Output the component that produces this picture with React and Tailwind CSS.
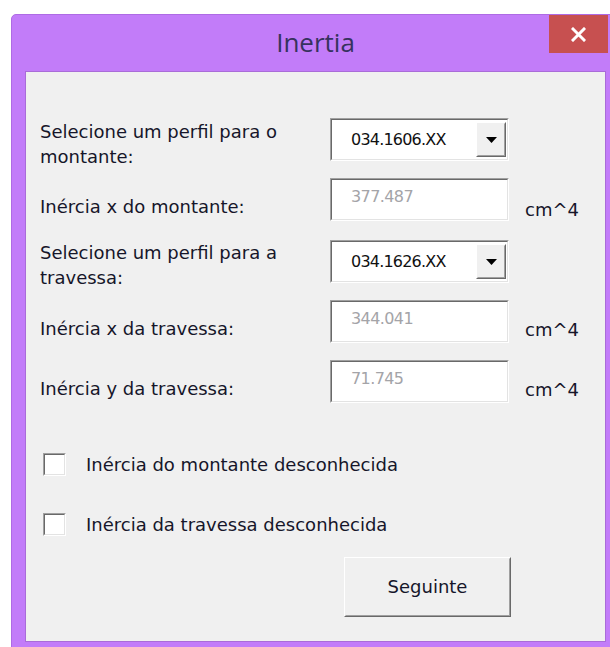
import React from 'react';

const labelFont = { fontFamily: '"DejaVu Sans", Verdana, sans-serif' };

// classic 3D sunken frame used by combo boxes, text boxes and checkboxes
function Sunken({ className = '', children }) {
  return (
    <div className={`border border-t-[#a0a0a0] border-l-[#a0a0a0] border-r-white border-b-white ${className}`}>
      <div className="h-full w-full border border-t-[#696969] border-l-[#696969] border-r-[#e3e3e3] border-b-[#e3e3e3] bg-white">
        {children}
      </div>
    </div>
  );
}

function ComboBox({ value }) {
  return (
    <Sunken className="h-[43px] w-[179px] shrink-0">
      <div className="flex h-full items-center">
        <span className="flex-1 pl-[19px] text-[16px] tracking-[-0.8px] text-[#111]" style={labelFont}>{value}</span>
        <div className="mr-px mt-[2px] h-[35px] w-[30px] self-start border border-t-white border-l-white border-r-[#696969] border-b-[#696969] bg-[#f0f0f0]">
          <div className="flex h-full items-center justify-center border border-t-[#f0f0f0] border-l-[#f0f0f0] border-r-[#a0a0a0] border-b-[#a0a0a0]">
            <svg width="11" height="6" viewBox="0 0 11 6">
              <path d="M0 0 H11 L5.5 6 Z" fill="#000" />
            </svg>
          </div>
        </div>
      </div>
    </Sunken>
  );
}

function TextBox({ value }) {
  return (
    <Sunken className="h-[43px] w-[179px] shrink-0">
      <div className="pl-[19px] pt-[7px] text-[16px] leading-[20px] tracking-[-0.6px] text-[#a4a4a8]" style={labelFont}>
        {value}
      </div>
    </Sunken>
  );
}

function CheckRow({ label, className = '' }) {
  return (
    <div className={`flex h-[25px] items-center ${className}`}>
      <Sunken className="ml-[3px] h-[23px] w-[23px]" />
      <span className="ml-[20px] text-[18px] leading-[25px]">{label}</span>
    </div>
  );
}

// one form row: label on the left, control, optional unit
function Row({ label, labelTop = 0, unit, unitTop = 18, className = '', children }) {
  return (
    <div className={`flex h-[43px] items-start ${className}`}>
      <div className="w-[290px] shrink-0 text-[18px] leading-[25px]" style={{ marginTop: labelTop }}>
        {label}
      </div>
      {children}
      {unit && (
        <span className="ml-[16px] text-[18px] leading-[25px]" style={{ marginTop: unitTop }}>
          {unit}
        </span>
      )}
    </div>
  );
}

export default function App() {
  return (
    <div className="h-[647px] w-[610px] overflow-hidden bg-white">
      <div className="relative ml-[11px] mt-[14px] w-[609px] rounded-t-[5px] border border-[#ae6be4] bg-[#c27cf9] px-[13px] pb-[13px]">
        {/* title bar */}
        <div className="flex h-[56px] items-center justify-center pb-[2px]">
          <span className="text-[26px] text-[#36325e]" style={{ fontFamily: '"Open Sans", "Noto Sans", sans-serif' }}>
            Inertia
          </span>
        </div>
        <div className="absolute left-[537px] top-0 flex h-[38px] w-[59px] items-center justify-center bg-[#c75050]">
          <svg width="15" height="15" viewBox="0 0 15 15">
            <path d="M2 2 L13 13 M13 2 L2 13" stroke="#fff" strokeWidth="3" strokeLinecap="square" />
          </svg>
        </div>

        {/* client area */}
        <div className="h-[571px] w-[581px] border border-[#a96cd8] bg-[#f0f0f0] pl-[14px] pt-[46px] text-[#16162a]" style={labelFont}>
          <Row labelTop={1} label={<>Selecione um perfil para o<br />montante:</>}>
            <ComboBox value="034.1606.XX" />
          </Row>

          <Row className="mt-[17px]" labelTop={16} label="Inércia x do montante:" unit="cm^4" unitTop={19}>
            <TextBox value="377.487" />
          </Row>

          <Row className="mt-[19px]" label={<>Selecione um perfil para a<br />travessa:</>}>
            <ComboBox value="034.1626.XX" />
          </Row>

          <Row className="mt-[17px]" labelTop={16} label="Inércia x da travessa:" unit="cm^4" unitTop={17}>
            <TextBox value="344.041" />
          </Row>

          <Row className="mt-[17px]" labelTop={16} label="Inércia y da travessa:" unit="cm^4" unitTop={17}>
            <TextBox value="71.745" />
          </Row>

          <CheckRow className="mt-[49px]" label="Inércia do montante desconhecida" />
          <CheckRow className="mt-[35px]" label="Inércia da travessa desconhecida" />

          <div className="ml-[304px] mt-[20px] h-[60px] w-[167px] border border-t-white border-l-white border-r-[#696969] border-b-[#696969]">
            <div className="flex h-full items-center justify-center border border-t-[#f0f0f0] border-l-[#f0f0f0] border-r-[#a0a0a0] border-b-[#a0a0a0] pb-[2px] text-[18px]">
              Seguinte
            </div>
          </div>
        </div>
      </div>
    </div>
  );
}
